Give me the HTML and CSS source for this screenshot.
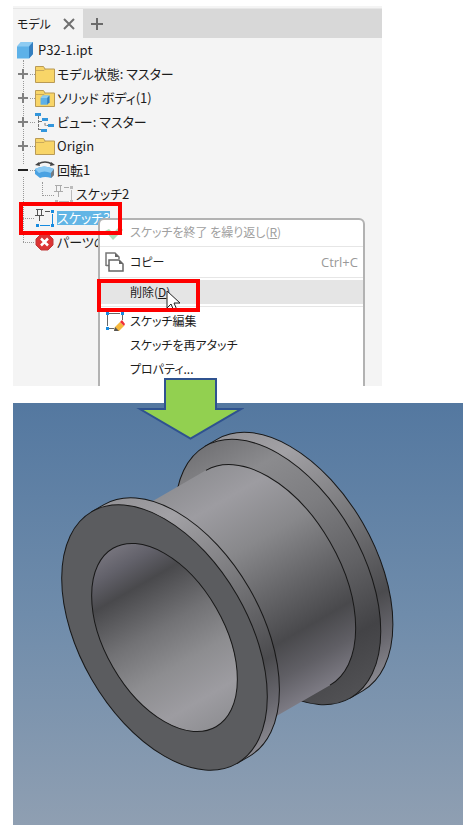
FILE: index.html
```html
<!DOCTYPE html>
<html lang="ja">
<head>
<meta charset="utf-8">
<meta name="viewport" content="width=device-width, initial-scale=1">
<title>モデル</title>
<link rel="stylesheet" href="styles.css">
</head>
<body>
<svg class="defs" width="0" height="0" aria-hidden="true">
  <defs>
    <symbol id="folder" viewBox="0 0 20 18">
      <path d="M.5 1.500h8l1.500 2.500h9.500v13.500H.5z" fill="#f8d568" stroke="#b99a55"/>
      <path d="M1 5.500h8l1.500-1.500" fill="none" stroke="#c9a95b"/>
    </symbol>
    <symbol id="cube" viewBox="0 0 18 18">
      <path d="M1 5.500 5 1h12v12l-4 4.500H1z" fill="#5db1e8"/>
      <path d="M1 5.500 5 1h12l-4 4.500z" fill="#8dcbf2"/>
      <path d="M13 5.500 17 1v12l-4 4.500z" fill="#347fc0"/>
    </symbol>
    <symbol id="sketch" viewBox="0 0 20 20">
      <path d="M1 1.500h7M2.500 2v5M6.500 2v5M0 7.500h9M4.500 8v5" class="pin"/>
      <path d="M10 3.500h5" class="edge"/>
      <path d="M17.500 6v10M5 17.500h10" class="side"/>
      <path d="M16 2h3v3h-3zM16 16h3v3h-3zM1 16h3v3H1z" class="node"/>
    </symbol>
  </defs>
</svg>

<main class="page">
  <section class="browser" aria-label="モデル ブラウザ">
    <header class="tabs">
      <div class="tab">
        <span>モデル</span>
        <button class="tab-btn" aria-label="閉じる"><svg width="12" height="12" viewBox="0 0 12 12"><path d="M1 1l10 10M11 1L1 11" stroke="#707070" stroke-width="2"/></svg></button>
      </div>
      <button class="tab-btn add" aria-label="追加"><svg width="12" height="12" viewBox="0 0 12 12"><path d="M6 0v12M0 6h12" stroke="#6a6a6a" stroke-width="2"/></svg></button>
    </header>

    <div class="row root"><svg width="18" height="18"><use href="#cube"/></svg><span>P32-1.ipt</span></div>
    <ul class="tree">
      <li class="row"><button class="toggle" aria-label="展開"></button><svg class="icon" width="20" height="18"><use href="#folder"/></svg><span>モデル状態: マスター</span></li>
      <li class="row"><button class="toggle" aria-label="展開"></button><svg class="icon" width="20" height="18"><use href="#folder"/><use href="#cube" x="5" y="6" width="10" height="10"/></svg><span>ソリッド ボディ(1)</span></li>
      <li class="row"><button class="toggle" aria-label="展開"></button><svg class="icon" width="20" height="20" viewBox="0 0 20 20"><path d="M3.500 4v14M4 9.500h4M4 17.500h2M10 11v2.500h4" fill="none" stroke="#777" stroke-dasharray="3 1"/><path d="M0 1h6v3H0zM7 6h6v3H7zM13 12h6v3h-6zM6 17h6v3H6z" fill="#3296dc"/></svg><span>ビュー: マスター</span></li>
      <li class="row"><button class="toggle" aria-label="展開"></button><svg class="icon" width="20" height="18"><use href="#folder"/></svg><span>Origin</span></li>
      <li class="row"><button class="toggle open" aria-label="折りたたむ"></button><svg class="icon" width="20" height="18" viewBox="0 0 20 18"><path d="M0 8Q9 3 19 8v6l-3 3q-6-2-11 0l-5-4z" fill="#4aa2e2"/><path d="M0 8Q9 3 19 8l-3 4Q9 9 4 12z" fill="#8bcaf3"/><path d="M16 12l3-4v6l-3 3z" fill="#747c82"/><path d="M3 3Q10-1 17 3" fill="none" stroke="#444" stroke-width="1.500"/><path d="M0 4l4-3 1 4zM20 4l-4-3-1 4z" fill="#444"/></svg><span>回転1</span></li>
      <li class="row child"><svg class="icon muted" width="20" height="20"><use href="#sketch"/></svg><span>スケッチ2</span></li>
      <li class="row leaf"><svg class="icon" width="20" height="20"><use href="#sketch"/></svg><span class="selected">スケッチ3</span></li>
      <li class="row leaf"><svg class="icon" width="20" height="18" viewBox="0 0 20 18"><path d="M6 1h7l5 5v6l-5 5H6l-5-5V6z" fill="#dc3434" stroke="#bd3939"/><path d="M6 5.500l7 7M13 5.500l-7 7" stroke="#fff" stroke-width="2.500"/></svg><span>パーツの</span></li>
    </ul>

    <div class="menu" role="menu">
      <button class="item first" role="menuitem" disabled><svg class="glyph" width="20" height="18" viewBox="0 0 20 18"><path d="M0 8l4-2 4 4 7-7 3 4-10 10z" fill="#a9dfb8"/></svg><span>スケッチを終了 を繰り返し(<u>R</u>)</span></button>
      <hr>
      <button class="item copy" role="menuitem"><svg class="glyph" width="20" height="20" viewBox="0 0 20 20"><path d="M1 14V1h9l4 4v2M1 13.500h3" fill="none" stroke="#777" stroke-width="1.500"/><path d="M10 1v4h4z" fill="#666"/><path d="M4 8h10l4 4v7H4z" fill="#fff" stroke="#666" stroke-width="1.500"/><path d="M14 8v4h4z" fill="#666"/></svg><span>コピー</span><kbd>Ctrl+C</kbd></button>
      <hr>
      <button class="item active" role="menuitem"><span class="glyph"></span><span>削除(<u>D</u>)</span></button>
      <hr>
      <button class="item" role="menuitem"><svg class="glyph" width="20" height="20" viewBox="0 0 20 20"><path d="M4 2.500h11M2.500 4v11M17.500 4v5M4 17.500h5" stroke="#666" stroke-dasharray="12 1"/><path d="M1 1h3v3H1zM16 1h3v3h-3zM1 16h3v3H1z" fill="#168be0"/><path d="M9 20l1-4 5-5 4 4-5 5z" fill="#f6b83d"/><path d="M9 20l1-4 4 4z" fill="#555"/><path d="M15 11l2-2 3 4-1 2z" fill="#ef2d37"/></svg><span>スケッチ編集</span></button>
      <button class="item" role="menuitem"><span class="glyph"></span><span>スケッチを再アタッチ</span></button>
      <button class="item" role="menuitem"><span class="glyph"></span><span>プロパティ...</span></button>
    </div>
    <div class="mark mark-sketch"></div>
    <svg class="cursor" width="16" height="24" viewBox="0 0 16 24"><path d="M1 1v17l4-4 3 7 3-1-3-7h6z" fill="#fff" stroke="#222"/></svg>
    <div class="mark mark-delete"></div>
  </section>

  <svg class="arrow" width="108" height="62" viewBox="0 0 108 62" aria-hidden="true"><path d="M29 1h51v30h25L54.500 60.500 4 31h25z" fill="#92d050" stroke="#2f528f" stroke-width="2"/></svg>

  <figure class="view">
    <svg viewBox="13 403 450 422" role="img" aria-label="両端フランジ付き円筒">
      <defs>
        <linearGradient id="rim" x1="0" y1="-145" x2="0" y2="145" gradientUnits="userSpaceOnUse"><stop offset="0" stop-color="#949397"/><stop offset=".15" stop-color="#a2a1a5"/><stop offset=".45" stop-color="#77777a"/><stop offset=".74" stop-color="#4b4b4e"/><stop offset=".88" stop-color="#69686f"/><stop offset="1" stop-color="#8b8a91"/></linearGradient>
        <linearGradient id="cone" x1="0" y1="-145" x2="0" y2="145" gradientUnits="userSpaceOnUse"><stop offset="0" stop-color="#737376"/><stop offset=".15" stop-color="#8b8b8e"/><stop offset=".35" stop-color="#7d7d80"/><stop offset=".6" stop-color="#616164"/><stop offset=".82" stop-color="#434346"/><stop offset="1" stop-color="#515154"/></linearGradient>
        <linearGradient id="body" x1="0" y1="-124" x2="0" y2="124" gradientUnits="userSpaceOnUse"><stop offset="0" stop-color="#909094"/><stop offset=".14" stop-color="#9d9ca1"/><stop offset=".35" stop-color="#88888b"/><stop offset=".55" stop-color="#68686b"/><stop offset=".75" stop-color="#49494c"/><stop offset=".88" stop-color="#605f65"/><stop offset="1" stop-color="#7d7b84"/></linearGradient>
        <linearGradient id="bore" x1="0" y1="-103" x2="0" y2="103" gradientUnits="userSpaceOnUse"><stop offset="0" stop-color="#76747d"/><stop offset=".1" stop-color="#62616a"/><stop offset=".22" stop-color="#49494c"/><stop offset=".45" stop-color="#727275"/><stop offset=".65" stop-color="#8d8d90"/><stop offset=".85" stop-color="#9d9ca1"/><stop offset="1" stop-color="#909094"/></linearGradient>
      </defs>
      <g transform="translate(164.500 637.500) rotate(-30)" stroke="#181818" fill="none">
        <path d="M131-145.300H145A84 145.300 0 0 1 145 145.300H131z" fill="url(#rim)"/>
        <ellipse cx="131" cy="0" rx="84" ry="145.300" fill="url(#cone)"/>
        <path d="M14-124H119.500A71.600 124 0 0 1 119.500 124H14z" fill="url(#body)" stroke="none"/>
        <path d="M119.500-124A71.600 124 0 0 1 119.500 124"/>
        <path d="M0-145.300H14A84 145.300 0 0 1 14 145.300H0z" fill="url(#rim)"/>
        <ellipse rx="84" ry="145.300" fill="#5b5c5f"/>
        <ellipse rx="59.500" ry="103" fill="url(#bore)"/>
      </g>
    </svg>
  </figure>
</main>
</body>
</html>
```

FILE: styles.css
```css
* { box-sizing: border-box; }

body {
  margin: 0;
  background: #fff;
  color: #1c1c1c;
  font: 13px/24px "Noto Sans CJK JP", sans-serif;
  font-feature-settings: "palt";
}

button {
  border: 0;
  padding: 0;
  background: none;
  color: inherit;
  font: inherit;
  font-feature-settings: inherit;
}

.defs { position: absolute; }

.page {
  position: relative;
  padding: 6px 8px 6px 13px;
}

.browser {
  position: relative;
  width: 82%;
  height: 380px;
  overflow: hidden;
  background: #f4f4f4;
}

.tabs {
  display: flex;
  height: 30px;
  margin: 2px 0;
  border-top: 1px solid #e6e6e6;
  background: #d8d8d8;
}

.tab {
  display: flex;
  align-items: center;
  gap: 12px;
  padding: 0 8px 0 4px;
  background: #f4f4f4;
  font-size: 12px;
}

.tab-btn { display: flex; align-items: center; }
.add { padding: 0 8px; }

.row {
  position: relative;
  display: flex;
  align-items: center;
  height: 24px;
  white-space: nowrap;
}

.root { gap: 4px; padding-left: 3px; margin-top: -2px; }
.row svg { flex: none; }

.tree {
  position: relative;
  margin: 0;
  padding: 0 0 0 4px;
  list-style: none;
}

.tree::before {
  content: "";
  position: absolute;
  left: 10px;
  top: -2px;
  bottom: 12px;
  border-left: 1px dotted #999;
}

.toggle {
  position: relative;
  width: 12px;
  height: 12px;
  margin-right: 6px;
  background:
    linear-gradient(#808080, #808080) center / 10px 2px no-repeat,
    linear-gradient(#808080, #808080) center / 2px 10px no-repeat,
    #f4f4f4;
}

.toggle.open { background: linear-gradient(#222, #222) center / 10px 2px no-repeat, #f4f4f4; }

.icon { margin-right: 2px; }
.leaf { padding-left: 18px; }
.child { padding-left: 37px; }

.row:not(.root)::before {
  content: "";
  position: absolute;
  left: 13px;
  top: 12px;
  width: 5px;
  border-top: 1px dotted #999;
}

.row.leaf::before { left: 6px; width: 11px; }

.row.child::before {
  left: 25px;
  top: 0;
  width: 11px;
  height: 13px;
  border: 0 dotted #999;
  border-width: 0 0 1px 1px;
}

.pin, .edge, .side { fill: none; stroke: #555; }
.side { stroke: #168be0; }
.node { fill: #168be0; }
.muted { opacity: 0.45; filter: grayscale(1); }

.selected {
  height: 14px;
  line-height: 14px;
  background: #62b5e5;
  color: #fff;
}

.menu {
  position: absolute;
  left: 85px;
  right: 17px;
  top: 212px;
  height: 180px;
  border: 2px solid #b2b2b2;
  border-radius: 6px;
  background: #fff;
  font-size: 12px;
}

.menu hr {
  height: 1px;
  margin: 2px 0;
  border: 0;
  background: #e6e6e6;
}

.item {
  display: flex;
  align-items: center;
  width: 100%;
  height: 24px;
  padding: 0 5px;
  text-align: left;
  white-space: nowrap;
}

.item:disabled { color: #a0a0a0; }
.item.copy { height: 26px; }
.item.active { background: #e5e5e5; }

.glyph {
  flex: none;
  width: 20px;
  margin-right: 5px;
}

.item kbd {
  margin-left: auto;
  color: #999;
  font: 13px/24px "Open Sans", sans-serif;
}

.mark {
  position: absolute;
  border: 4px solid #fe0000;
}

.mark-sketch { left: 6px; top: 196px; width: 103px; height: 33px; }
.mark-delete { left: 84px; top: 273px; width: 103px; height: 33px; }

.cursor { position: absolute; left: 153px; top: 284px; }

.arrow {
  position: absolute;
  left: 136px;
  top: 378px;
}

.view {
  margin: 17px 0 0;
  background: linear-gradient(#5478a0, #6f8cab 50%, #8f9fb2);
}

.view svg { display: block; width: 100%; height: auto; }
```
